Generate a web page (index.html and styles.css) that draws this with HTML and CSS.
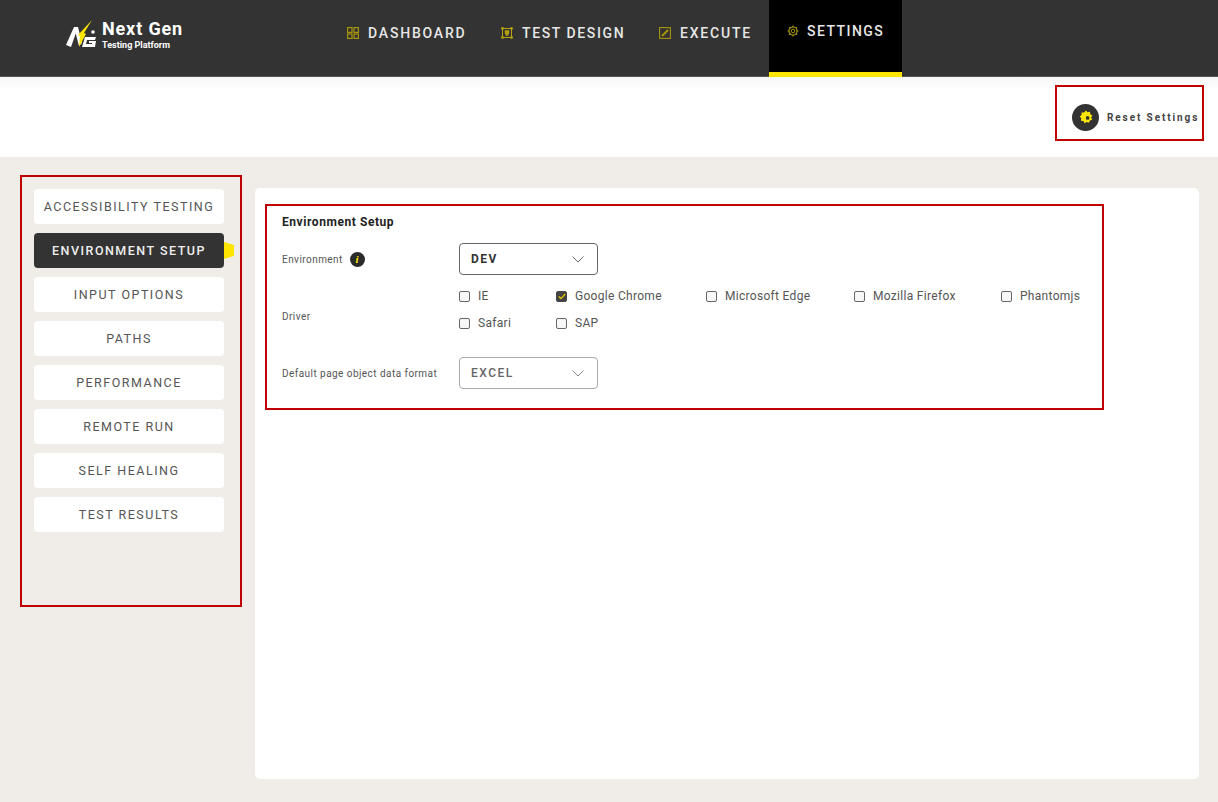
FILE: index.html
```html
<!DOCTYPE html>
<html lang="en">
<head>
  <meta charset="UTF-8" />
  <title>Next Gen Testing Platform – Settings</title>
  <link rel="stylesheet" href="styles.css">
</head>
<body>

  <header class="topbar">
    <div class="logo">
      <svg class="logo-mark" width="32" height="32" viewBox="0 0 32 32">
        <path d="M1 26 L9 8 L13 8 L6 28 Z" fill="#fff"/>
        <path d="M9 8 L13 8 L17 24 L14 27 Z" fill="#fff"/>
        <path d="M27 1 L19 14 L21 15 L14 28 L15 17 L13 16 Z" fill="#ffe600"/>
        <path d="M20 18 L31 18 L30 21 L22 21 L21 25 L27 25 L27 24 L24 24 L24 22 L31 22 L30 28 L17 28 Z" fill="#fff"/>
        <circle cx="28" cy="13" r="1.8" fill="#fff"/>
      </svg>
      <div class="logo-text">
        <div class="logo-name">Next Gen</div>
        <div class="logo-sub">Testing Platform</div>
      </div>
    </div>

    <nav class="nav">
      <a class="nav-item nav-dashboard">
        <svg width="12" height="12" viewBox="0 0 12 12" fill="none" stroke="#a8960a" stroke-width="1.2">
          <rect x="0.6" y="0.6" width="4.4" height="4.8"/>
          <rect x="7" y="0.6" width="4.4" height="4.8"/>
          <rect x="0.6" y="7" width="4.4" height="4.4"/>
          <rect x="7" y="7" width="4.4" height="4.4"/>
        </svg>
        DASHBOARD
      </a>
      <a class="nav-item nav-design">
        <svg width="12" height="12" viewBox="0 0 12 12" fill="#b5a20c" stroke="#b5a20c">
          <rect x="1.5" y="1.5" width="9" height="9" fill="none" stroke-width="1"/>
          <circle cx="1.5" cy="1.5" r="1.4" stroke="none"/>
          <circle cx="10.5" cy="1.5" r="1.4" stroke="none"/>
          <circle cx="1.5" cy="10.5" r="1.4" stroke="none"/>
          <circle cx="10.5" cy="10.5" r="1.4" stroke="none"/>
          <path d="M3.8 3.2 H8.2 V6 L7 8.8 H5 L3.8 6 Z" stroke="none"/>
        </svg>
        TEST DESIGN
      </a>
      <a class="nav-item nav-execute">
        <svg width="12" height="12" viewBox="0 0 12 12" fill="none" stroke="#a8960a">
          <rect x="0.6" y="0.6" width="10.8" height="10.8" stroke-width="1.1"/>
          <path d="M3 9 L9 3" stroke-width="2.2"/>
        </svg>
        EXECUTE
      </a>
      <a class="nav-item nav-settings">
        <svg width="12" height="12" viewBox="0 0 12 12" fill="none" stroke="#a8960a">
          <circle cx="6" cy="6" r="4" stroke-width="1.2"/>
          <circle cx="6" cy="6" r="1.8" stroke-width="1"/>
          <path d="M6 0.5 V2 M6 10 V11.5 M0.5 6 H2 M10 6 H11.5 M2.1 2.1 L3.2 3.2 M8.8 8.8 L9.9 9.9 M2.1 9.9 L3.2 8.8 M8.8 3.2 L9.9 2.1" stroke-width="1.2"/>
        </svg>
        SETTINGS
      </a>
    </nav>
  </header>

  <div class="subbar">
    <div class="reset-box">
      <span class="reset-icon">
        <svg width="14" height="14" viewBox="0 0 12 12">
          <path d="M6 0.5 L7.3 2 L9.4 1.6 L9.7 3.6 L11.5 4.7 L10.4 6.4 L11.3 8.3 L9.3 9 L8.6 11 L6.6 10.2 L4.8 11.3 L3.8 9.5 L1.6 9.2 L2 7 L0.6 5.5 L2.2 4.2 L2.2 2.2 L4.3 2.2 Z" fill="#ffe600"/>
          <circle cx="7.4" cy="6.8" r="1.6" fill="#333"/>
        </svg>
      </span>
      <span class="reset-label">Reset Settings</span>
    </div>
  </div>

  <main class="content">
    <aside class="sidebar">
      <div class="side-item">ACCESSIBILITY TESTING</div>
      <div class="side-item active">ENVIRONMENT SETUP</div>
      <div class="side-item">INPUT OPTIONS</div>
      <div class="side-item">PATHS</div>
      <div class="side-item">PERFORMANCE</div>
      <div class="side-item">REMOTE RUN</div>
      <div class="side-item">SELF HEALING</div>
      <div class="side-item">TEST RESULTS</div>
    </aside>

    <section class="card">
      <div class="setup-box">
        <h2>Environment Setup</h2>

        <div class="row row-env">
          <div class="label">Environment <span class="info">i</span></div>
          <div class="select">
            DEV
            <svg width="12" height="7" viewBox="0 0 12 7" fill="none" stroke="#666" stroke-width="1"><path d="M0.5 0.5 L6 6 L11.5 0.5"/></svg>
          </div>
        </div>

        <div class="row row-driver">
          <div class="label">Driver</div>
          <div class="drivers">
            <label class="check"><span class="box"></span>IE</label>
            <label class="check"><span class="box checked"><svg width="8" height="7" viewBox="0 0 8 7" fill="none" stroke="#e0c800" stroke-width="1.4"><path d="M0.8 3.5 L3 5.6 L7.2 1"/></svg></span>Google Chrome</label>
            <label class="check"><span class="box"></span>Microsoft Edge</label>
            <label class="check"><span class="box"></span>Mozilla Firefox</label>
            <label class="check"><span class="box"></span>Phantomjs</label>
            <label class="check"><span class="box"></span>Safari</label>
            <label class="check"><span class="box"></span>SAP</label>
          </div>
        </div>

        <div class="row row-format">
          <div class="label">Default page object data format</div>
          <div class="select select-light">
            EXCEL
            <svg width="12" height="7" viewBox="0 0 12 7" fill="none" stroke="#888" stroke-width="1"><path d="M0.5 0.5 L6 6 L11.5 0.5"/></svg>
          </div>
        </div>
      </div>
    </section>
  </main>

</body>
</html>
```

FILE: styles.css
```css
* {
  box-sizing: border-box;
}

body {
  margin: 0;
  height: 802px;
  overflow: hidden;
  display: flex;
  flex-direction: column;
  font-family: Roboto, "Liberation Sans", sans-serif;
  background: #f0ede8;
  color: #333;
}

/* top bar */
.topbar {
  height: 77px;
  flex: none;
  display: flex;
  background: #333;
  border-bottom: 1px solid #555;
}

.logo {
  width: 347px;
  padding: 19px 0 0 65px;
  display: flex;
  gap: 5px;
}

.logo-name {
  font-size: 18px;
  line-height: 20px;
  font-weight: 700;
  letter-spacing: 0.85px;
  color: #fff;
}

.logo-sub {
  font-size: 9px;
  line-height: 12px;
  font-weight: 700;
  color: #fff;
}

.nav {
  display: flex;
}

.nav-item {
  display: flex;
  align-items: center;
  gap: 9px;
  padding-bottom: 10px;
  font-size: 14px;
  font-weight: 500;
  letter-spacing: 1.8px;
  color: #e6e6e6;
}

.nav-dashboard {
  width: 154px;
}

.nav-design {
  width: 158px;
  letter-spacing: 1.6px;
}

.nav-execute {
  width: 110px;
}

.nav-settings {
  width: 133px;
  height: 77px;
  margin-bottom: -1px;
  padding: 0 0 11px 18px;
  gap: 8px;
  letter-spacing: 1.45px;
  background: #000;
  border-bottom: 5px solid #ffe600;
}

/* reset strip */
.subbar {
  height: 80px;
  flex: none;
  display: flex;
  justify-content: flex-end;
  padding: 8px 14px 0 0;
  background: linear-gradient(#f6f6f6, #fff 12px);
}

.reset-box {
  width: 149px;
  height: 56px;
  display: flex;
  align-items: center;
  gap: 8px;
  padding: 8px 0 0 15px;
  border: 2px solid #c00000;
}

.reset-icon {
  width: 27px;
  height: 27px;
  border-radius: 50%;
  background: #333;
  display: flex;
  align-items: center;
  justify-content: center;
}

.reset-label {
  font-size: 10px;
  font-weight: 700;
  letter-spacing: 1.9px;
  color: #444;
  white-space: nowrap;
}

/* main area */
.content {
  flex: 1;
  display: flex;
  align-items: flex-start;
  padding: 18px 19px 23px 20px;
  gap: 13px;
}

.sidebar {
  width: 222px;
  height: 432px;
  padding: 12px 16px 0 12px;
  border: 2px solid #c00000;
  display: flex;
  flex-direction: column;
  gap: 9px;
}

.side-item {
  position: relative;
  height: 35px;
  display: flex;
  align-items: center;
  justify-content: center;
  border-radius: 4px;
  background: #fff;
  font-size: 12.5px;
  letter-spacing: 1.5px;
  color: #555;
  white-space: nowrap;
}

.side-item.active {
  background: #333;
  color: #eee;
  font-weight: 500;
}

.side-item.active::after {
  content: "";
  position: absolute;
  right: -10px;
  top: 9px;
  width: 10px;
  height: 17px;
  background: #ffe600;
  clip-path: polygon(0 0, 100% 18%, 100% 82%, 0 100%);
}

.card {
  width: 944px;
  height: 591px;
  margin-top: 13px;
  padding: 16px 0 0 10px;
  background: #fff;
  border-radius: 5px;
}

.setup-box {
  width: 839px;
  height: 206px;
  padding: 9px 0 0 15px;
  border: 2px solid #c00000;
}

h2 {
  margin: 0 0 13px;
  font-size: 12px;
  line-height: 15px;
  font-weight: 700;
  letter-spacing: 0.57px;
  color: #222;
}

.row {
  display: flex;
  align-items: center;
}

.label {
  width: 177px;
  flex: none;
  display: flex;
  align-items: center;
  gap: 7px;
  font-size: 10px;
  letter-spacing: 0.45px;
  color: #555;
  white-space: nowrap;
}

.info {
  width: 15px;
  height: 15px;
  border-radius: 50%;
  background: #2b2b2b;
  color: #ffe600;
  font-family: "Liberation Serif", serif;
  font-size: 11px;
  font-weight: 700;
  font-style: italic;
  display: flex;
  align-items: center;
  justify-content: center;
}

.select {
  width: 139px;
  height: 32px;
  display: flex;
  align-items: center;
  justify-content: space-between;
  padding: 0 13px 0 11px;
  background: #fff;
  border: 1.5px solid #666;
  border-radius: 4px;
  font-size: 12px;
  font-weight: 700;
  letter-spacing: 1.5px;
  color: #333;
}

.select-light {
  border-color: #aaa;
  color: #666;
  font-weight: 500;
}

.row-driver {
  margin-top: 12px;
}

.drivers {
  display: grid;
  grid-template-columns: 97px 150px 148px 147px auto;
  row-gap: 9px;
  padding-bottom: 13px;
}

.check {
  height: 18px;
  display: flex;
  align-items: center;
  gap: 8px;
  font-size: 12px;
  letter-spacing: 0.3px;
  color: #555;
  white-space: nowrap;
}

.box {
  width: 11px;
  height: 11px;
  flex: none;
  display: flex;
  align-items: center;
  justify-content: center;
  background: #f7f7f7;
  border: 1px solid #666;
  border-radius: 2px;
}

.box.checked {
  background: #444;
  border-color: #444;
}

.row-format {
  margin-top: 12px;
}
```
